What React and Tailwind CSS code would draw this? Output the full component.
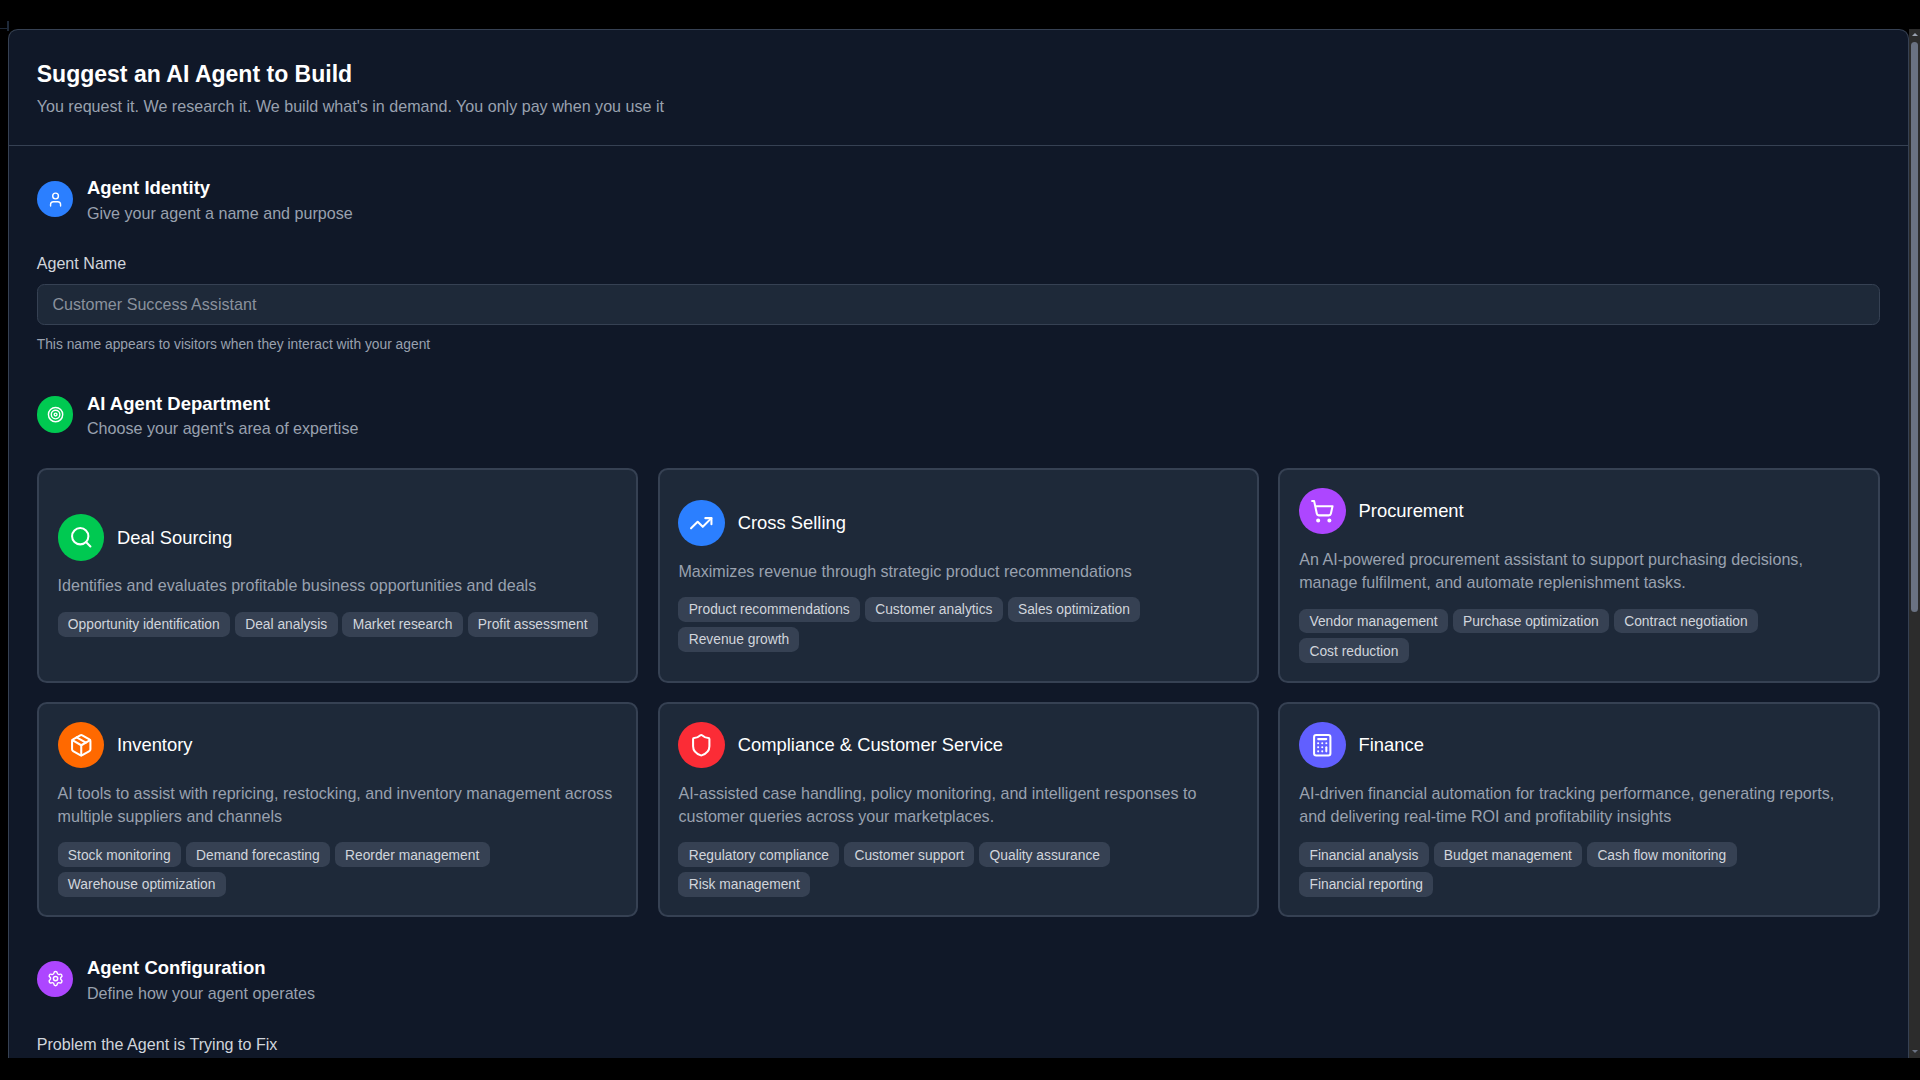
import React from "react";
import { User, Target, Search, TrendingUp, ShoppingCart, Package, Shield, Calculator, Settings } from "lucide-react";

const cards = [
  { title: "Deal Sourcing", color: "bg-green-500", Icon: Search, desc: "Identifies and evaluates profitable business opportunities and deals", tags: ["Opportunity identification", "Deal analysis", "Market research", "Profit assessment"] },
  { title: "Cross Selling", color: "bg-blue-500", Icon: TrendingUp, desc: "Maximizes revenue through strategic product recommendations", tags: ["Product recommendations", "Customer analytics", "Sales optimization", "Revenue growth"] },
  { title: "Procurement", color: "bg-purple-500", Icon: ShoppingCart, desc: "An AI-powered procurement assistant to support purchasing decisions, manage fulfilment, and automate replenishment tasks.", tags: ["Vendor management", "Purchase optimization", "Contract negotiation", "Cost reduction"] },
  { title: "Inventory", color: "bg-orange-500", Icon: Package, desc: "AI tools to assist with repricing, restocking, and inventory management across multiple suppliers and channels", tags: ["Stock monitoring", "Demand forecasting", "Reorder management", "Warehouse optimization"] },
  { title: "Compliance & Customer Service", color: "bg-red-500", Icon: Shield, desc: "AI-assisted case handling, policy monitoring, and intelligent responses to customer queries across your marketplaces.", tags: ["Regulatory compliance", "Customer support", "Quality assurance", "Risk management"] },
  { title: "Finance", color: "bg-indigo-500", Icon: Calculator, desc: "AI-driven financial automation for tracking performance, generating reports, and delivering real-time ROI and profitability insights", tags: ["Financial analysis", "Budget management", "Cash flow monitoring", "Financial reporting"] },
];

function SectionHead({ color, Icon, title, sub, className = "" }) {
  return (
    <div className={`flex items-center gap-[11px] ${className}`}>
      <div className={`w-[30px] h-[30px] rounded-full flex items-center justify-center ${color}`}>
        <Icon size={14} className="text-white" />
      </div>
      <div>
        <h2 className="text-[15.1px] leading-[24px] font-bold text-white">{title}</h2>
        <p className="-mt-px text-[13.15px] leading-[19px] text-gray-400">{sub}</p>
      </div>
    </div>
  );
}

function Card({ title, color, Icon, desc, tags }) {
  return (
    <div className="h-[176px] flex flex-col justify-center rounded-lg border-2 border-gray-700 bg-gray-800 px-[15.4px] py-[15px]">
      <div className="flex items-center gap-[10.5px]">
        <div className={`w-[38px] h-[38px] rounded-full flex items-center justify-center ${color}`}>
          <Icon size={20} className="text-white" />
        </div>
        <h3 className="text-[15px] text-white font-normal">{title}</h3>
      </div>
      <p className="mt-[11px] text-[13.15px] leading-[19px] text-gray-400">{desc}</p>
      <div className="mt-[11.5px] flex flex-wrap gap-1">
        {tags.map((t) => (
          <span key={t} className="h-[20.4px] flex items-center rounded-md bg-gray-700 px-[8.4px] text-[11.28px] text-gray-300">{t}</span>
        ))}
      </div>
    </div>
  );
}

export default function App() {
  return (
    <div className="h-screen w-full overflow-hidden bg-black">
      <div className="relative flex h-[882px] w-[1568.2px] flex-col pt-6 pb-[18px] [zoom:1.2245] font-['Liberation_Sans',Arial,sans-serif]">
        <div className="absolute left-[6px] top-[17px] h-[8px] w-px bg-gray-800" />
        <div className="absolute left-0 top-[23px] h-px w-[7px] bg-gray-800" />
        <div className="flex min-h-0 flex-1">
          <main className="ml-[6.5px] min-w-0 flex-1 overflow-hidden rounded-t-lg border-x border-t border-gray-700 bg-gray-900">
            <header className="border-b border-gray-700 pr-[23.4px] pl-[22.7px] pt-[22px] pb-[20px]">
              <h1 className="text-[18.8px] leading-[28px] font-bold text-white">Suggest an AI Agent to Build</h1>
              <p className="text-[13.15px] leading-[24px] text-gray-400">You request it. We research it. We build what's in demand. You only pay when you use it</p>
            </header>
            <div className="pr-[23.4px] pl-[22.7px] pt-[22px]">
              <SectionHead color="bg-blue-500" Icon={User} title="Agent Identity" sub="Give your agent a name and purpose" />
              <label className="mt-[21.5px] block text-[13.15px] leading-[20px] text-gray-300">Agent Name</label>
              <input
                readOnly
                placeholder="Customer Success Assistant"
                className="mt-[7px] block h-[33px] w-full rounded-md border border-gray-700 bg-gray-800 px-3 text-[13.15px] text-gray-300 outline-none placeholder:text-[#8a919d]"
              />
              <p className="mt-[8.5px] text-[11.28px] leading-[16px] text-gray-400">This name appears to visitors when they interact with your agent</p>
              <SectionHead className="mt-[28px]" color="bg-green-500" Icon={Target} title="AI Agent Department" sub="Choose your agent's area of expertise" />
              <div className="mt-[22.5px] grid grid-cols-3 gap-x-4 gap-y-[15px]">
                {cards.map((c) => <Card key={c.title} {...c} />)}
              </div>
              <SectionHead className="mt-[29.5px]" color="bg-purple-500" Icon={Settings} title="Agent Configuration" sub="Define how your agent operates" />
              <label className="mt-[22px] block text-[13.15px] leading-[20px] text-gray-300">Problem the Agent is Trying to Fix</label>
            </div>
          </main>
          <div className="flex w-[9px] flex-col items-center bg-[#2c2c2c] pt-[3px] pb-[4px]">
            <div className="h-0 w-0 border-x-[3px] border-b-[3px] border-x-transparent border-b-gray-400" />
            <div className="mt-[5px] h-[465px] w-[6px] rounded-full bg-gray-500" />
            <div className="mt-auto h-0 w-0 border-x-[3px] border-t-[3px] border-x-transparent border-t-gray-500" />
          </div>
        </div>
      </div>
    </div>
  );
}
